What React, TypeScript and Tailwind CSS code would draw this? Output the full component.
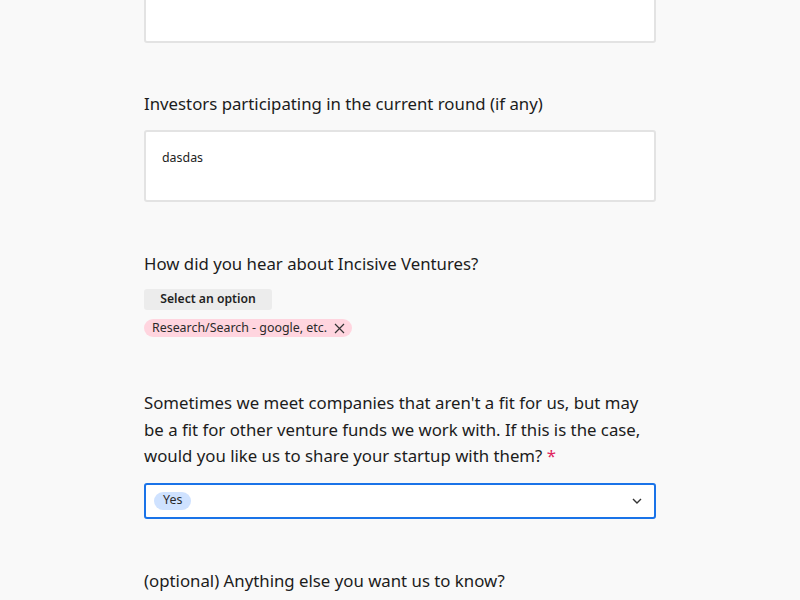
import React from 'react';

function Label({ children }: { children: React.ReactNode }) {
    return <p className="text-[16.8px] leading-[26.5px] text-[#1c1c1c]">{children}</p>;
}

export default function App() {
    return (
        <div
            className="min-h-[600px] h-[600px] overflow-hidden bg-[#f9f9f9]"
            style={{ fontFamily: '"Noto Sans", "Open Sans", sans-serif' }}
        >
            <div className="mx-auto w-[512px] flex flex-col -mt-[30px]">
                <div className="h-[73px] bg-white border-2 border-[#e3e3e3] rounded-[3px]" />

                <div className="mt-[48px]">
                    <Label>Investors participating in the current round (if any)</Label>
                </div>
                <div className="mt-[12px] h-[72px] bg-white border-2 border-[#e3e3e3] rounded-[3px] px-4 pt-[17px]">
                    <p className="text-[12.4px] text-[#222]">dasdas</p>
                </div>

                <div className="mt-[49px]">
                    <Label>How did you hear about Incisive Ventures?</Label>
                </div>
                <div className="mt-[12px] flex">
                    <div className="h-[21px] w-[128px] rounded-[3px] bg-[#ececec] flex items-center justify-center text-[12.2px] font-semibold text-[#1f1f1f]">
                        Select an option
                    </div>
                </div>
                <div className="mt-[9px] flex">
                    <div className="h-[18px] rounded-full bg-[#ffd5df] pl-[8px] pr-[7px] flex items-center gap-[7px] text-[12.4px] text-[#2a2a2a]">
                        <span>Research/Search - google, etc.</span>
                        <svg width="11" height="11" viewBox="0 0 11 11" fill="none" stroke="#333" strokeWidth="1.2">
                            <path d="M1 1L10 10M10 1L1 10" />
                        </svg>
                    </div>
                </div>

                <div className="mt-[53px]">
                    <Label>
                        Sometimes we meet companies that aren't a fit for us, but may be a fit for other venture funds we work with. If
                        this is the case, would you like us to share your startup with them?{' '}
                        <span className="text-[#e0245e]">*</span>
                    </Label>
                </div>
                <div className="mt-[13px] h-[36px] bg-white border-2 border-[#1a73e8] rounded-[3px] flex items-center justify-between pl-[8px] pr-[12px]">
                    <span className="h-[18px] rounded-full bg-[#cfe2ff] px-[9px] flex items-center text-[12.4px] text-[#2a2a2a]">
                        Yes
                    </span>
                    <svg width="10" height="6" viewBox="0 0 10 6" fill="none" stroke="#333" strokeWidth="1.4">
                        <path d="M1 1L5 5L9 1" />
                    </svg>
                </div>

                <div className="mt-[49px]">
                    <Label>(optional) Anything else you want us to know?</Label>
                </div>
            </div>
        </div>
    );
}
